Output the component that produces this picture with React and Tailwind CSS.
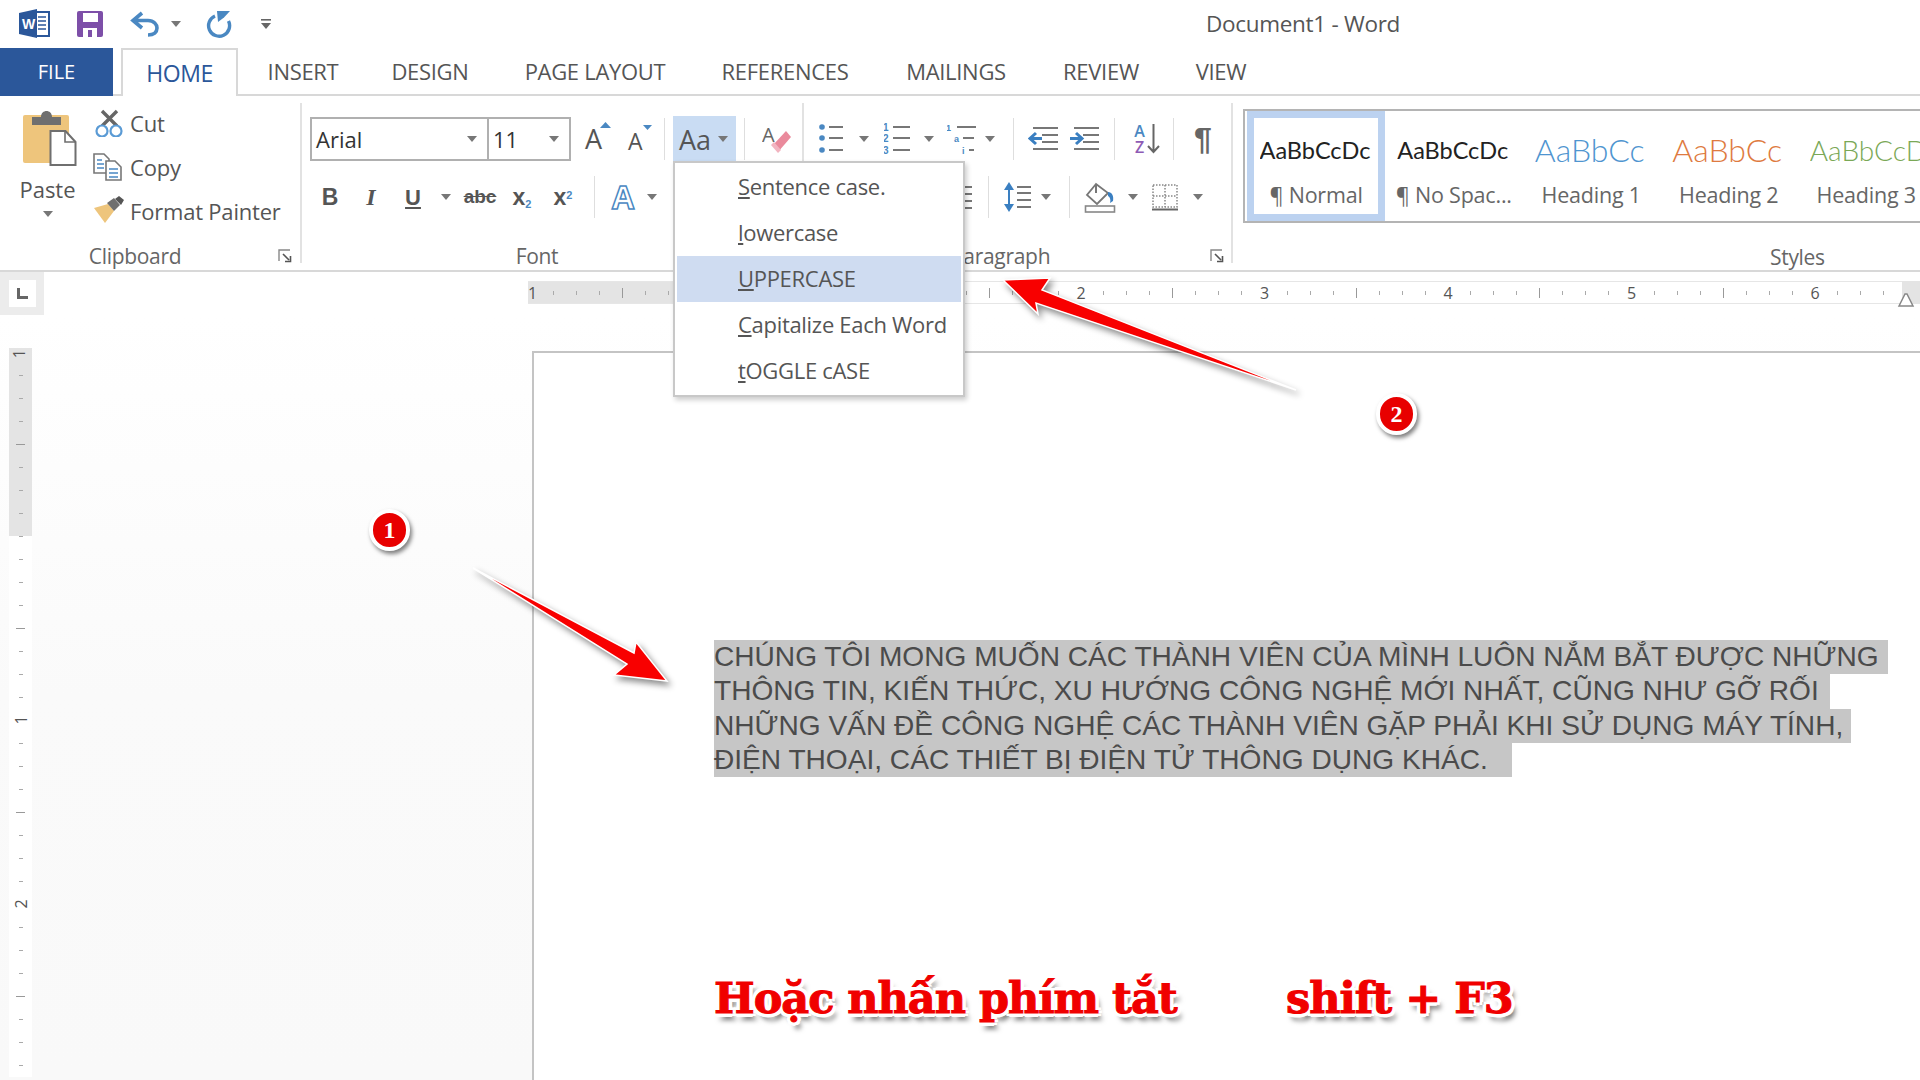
import React from 'react';

const tabs = [
  ['INSERT', 'w-[130px]'],
  ['DESIGN', 'w-[124px]'],
  ['PAGE LAYOUT', 'w-[206px]'],
  ['REFERENCES', 'w-[174px]'],
  ['MAILINGS', 'w-[168px]'],
  ['REVIEW', 'w-[122px]'],
  ['VIEW', 'w-[118px]'],
];

const caseItems = [
  ['S', 'entence case.'],
  ['l', 'owercase'],
  ['U', 'PPERCASE'],
  ['C', 'apitalize Each Word'],
  ['t', 'OGGLE cASE'],
];

const styleItems = [
  { name: '¶ Normal', sample: 'AaBbCcDc', cls: 'text-[23.5px] text-[#222]', selected: true },
  { name: '¶ No Spac...', sample: 'AaBbCcDc', cls: 'text-[23.5px] text-[#222]' },
  { name: 'Heading 1', sample: 'AaBbCc', cls: 'text-[32px] font-light text-[#4f95d0]' },
  { name: 'Heading 2', sample: 'AaBbCc', cls: 'text-[32px] font-light text-[#de7a40]' },
  { name: 'Heading 3', sample: 'AaBbCcD', cls: 'text-[28px] font-light text-[#7aa856]' },
];

const textLines = [
  ['CHÚNG TÔI MONG MUỐN CÁC THÀNH VIÊN CỦA MÌNH LUÔN NẮM BẮT ĐƯỢC NHỮNG', 'w-[1174px]'],
  ['THÔNG TIN, KIẾN THỨC, XU HƯỚNG CÔNG NGHỆ MỚI NHẤT, CŨNG NHƯ GỠ RỐI', 'w-[1116px]'],
  ['NHỮNG VẤN ĐỀ CÔNG NGHỆ CÁC THÀNH VIÊN GẶP PHẢI KHI SỬ DỤNG MÁY TÍNH,', 'w-[1137px]'],
  ['ĐIỆN THOẠI, CÁC THIẾT BỊ ĐIỆN TỬ THÔNG DỤNG KHÁC.', 'w-[798px]'],
];

function Caret({ className = '' }) {
  return (
    <svg width="10" height="6" viewBox="0 0 10 6" className={`shrink-0 ${className}`}>
      <path d="M0 0h10L5 6z" fill="#777" />
    </svg>
  );
}

function Sep({ className = '' }) {
  return <div className={`w-px h-[42px] bg-[#dedede] shrink-0 ${className}`} />;
}

function Launcher() {
  return (
    <svg width="14" height="14" viewBox="0 0 14 14">
      <path d="M1 12V1h11" fill="none" stroke="#888" strokeWidth="1.4" />
      <path d="M5 5l6 6M12.5 7v5.5H7" fill="none" stroke="#555" strokeWidth="1.6" />
    </svg>
  );
}

function WordIcon() {
  return (
    <svg width="32" height="30" viewBox="19 6 32 30" className="shrink-0">
      <rect x="33" y="9" width="16" height="24" fill="#fff" stroke="#2b579a" strokeWidth="2" />
      <path d="M38 14h8M38 18h8M38 22h8M38 26h8" stroke="#2b579a" strokeWidth="1.6" />
      <path d="M19 10L37 6v29l-18-4z" fill="#2b579a" />
      <text x="22" y="26" fontSize="14" fontWeight="700" fill="#fff" fontFamily="Liberation Sans, sans-serif">W</text>
    </svg>
  );
}

function SaveIcon() {
  return (
    <svg width="28" height="28" viewBox="76 7 28 28" className="shrink-0">
      <rect x="77" y="8" width="26" height="26" rx="2" fill="#7d4fa8" />
      <rect x="83" y="10" width="15" height="9" fill="#fff" />
      <rect x="83" y="25" width="14" height="9" fill="#fff" />
      <rect x="88" y="27" width="4" height="7" fill="#7d4fa8" />
    </svg>
  );
}

function UndoIcon() {
  return (
    <svg width="30" height="28" viewBox="130 6 30 28" className="shrink-0">
      <path d="M142 9l-9 7.500 9 7.500M134 16.500h14c6 0 9 4 9 7.500 0 4-3 7-9 7" fill="none" stroke="#4a88c2" strokeWidth="3.600" />
    </svg>
  );
}

function RepeatIcon() {
  return (
    <svg width="28" height="28" viewBox="207 6 28 28" className="shrink-0">
      <path d="M217 12a10.500 10.500 0 1 0 13.500 5" fill="none" stroke="#4a88c2" strokeWidth="3.400" />
      <path d="M219 7l1 11 6-4.500 6-6.500z" fill="#4a88c2" />
    </svg>
  );
}

function CustomizeIcon() {
  return (
    <svg width="12" height="12" viewBox="0 0 12 12" className="shrink-0">
      <path d="M1 1h10v1.600H1z" fill="#666" />
      <path d="M1 5h10L6 11z" fill="#666" />
    </svg>
  );
}

function PasteIcon() {
  return (
    <svg width="56" height="60" viewBox="24 110 56 60" className="shrink-0">
      <rect x="25" y="116" width="46" height="48" rx="2" fill="#eec57c" />
      <path d="M34 126v-8h9c0-8 11-8 11 0h9v8z" fill="#6f6f6f" />
      <path d="M52.500 132h15l10 11v23h-25z" fill="#fff" stroke="#6f6f6f" strokeWidth="2" />
      <path d="M67 132v11h10" fill="none" stroke="#6f6f6f" strokeWidth="1.600" />
    </svg>
  );
}

function CutIcon() {
  return (
    <svg width="28" height="28" viewBox="95 107 28 28" className="shrink-0">
      <path d="M102 109l15 15M117 109l-15 15" stroke="#666" strokeWidth="3.400" />
      <circle cx="102" cy="129" r="5.500" fill="#fff" stroke="#5b9bd5" strokeWidth="2.200" />
      <circle cx="116" cy="129" r="5.500" fill="#fff" stroke="#5b9bd5" strokeWidth="2.200" />
    </svg>
  );
}

function CopyIcon() {
  return (
    <svg width="30" height="30" viewBox="93 152 30 30" className="shrink-0">
      <path d="M94 154h10l5 5v14H94z" fill="#fff" stroke="#777" strokeWidth="1.600" />
      <path d="M97 160h5M97 164h7M97 168h7" stroke="#4a88c2" strokeWidth="1.500" />
      <path d="M106 161h9l6 6v13h-15z" fill="#fff" stroke="#777" strokeWidth="1.600" />
      <path d="M109 169h9M109 173h9M109 177h9" stroke="#4a88c2" strokeWidth="1.500" />
    </svg>
  );
}

function PainterIcon() {
  return (
    <svg width="32" height="30" viewBox="93 196 32 30" className="shrink-0">
      <path d="M94 208l11 15 9-12-6-7z" fill="#eec57c" />
      <path d="M107 203l7 8 6-6-6-7z" fill="#6f6f6f" />
      <path d="M115 199l4-3 5 4-3 5z" fill="#555" />
    </svg>
  );
}

function GrowIcon() {
  return (
    <div className="relative w-[26px] h-[24px] text-[27px] leading-[24px] text-[#555]">
      A
      <svg width="11" height="6" viewBox="0 0 11 6" className="absolute right-0 -top-[5px]">
        <path d="M0 6h11L5.500 0z" fill="#4a88c2" />
      </svg>
    </div>
  );
}

function ShrinkIcon() {
  return (
    <div className="relative w-[24px] h-[20px] text-[23px] leading-[20px] text-[#555]">
      A
      <svg width="9" height="5" viewBox="0 0 9 5" className="absolute right-0 -top-[6px]">
        <path d="M0 0h9L4.500 5z" fill="#4a88c2" />
      </svg>
    </div>
  );
}

function EraserIcon() {
  return (
    <svg width="30" height="30" viewBox="761 122 30 30" className="shrink-0">
      <text x="761" y="140" fontSize="20" fill="#666" fontFamily="Open Sans, sans-serif">A</text>
      <path d="M773 142l12-13 5 6-13 15z" fill="#ea8a9c" />
      <path d="M770 143l7 8 3-3-7-8z" fill="#f2b4c0" />
    </svg>
  );
}

function BulletIcon() {
  return (
    <svg width="26" height="32" viewBox="820 121 26 32" className="shrink-0">
      <g fill="#4a88c2">
        <circle cx="823" cy="125" r="2.800" />
        <circle cx="823" cy="136" r="2.800" />
        <circle cx="823" cy="148" r="2.800" />
      </g>
      <path d="M830 125h14M830 136h14M830 148h14" stroke="#777" strokeWidth="2" />
    </svg>
  );
}

function NumberIcon() {
  return (
    <svg width="28" height="32" viewBox="885 121 28 32" className="shrink-0">
      <g fill="#4a88c2" fontSize="10" fontWeight="700" fontFamily="Liberation Sans, sans-serif">
        <text x="884" y="129">1</text>
        <text x="884" y="140">2</text>
        <text x="884" y="152">3</text>
      </g>
      <path d="M894 125h17M894 136h17M894 148h17" stroke="#777" strokeWidth="2" />
    </svg>
  );
}

function MultiIcon() {
  return (
    <svg width="30" height="34" viewBox="948 120 30 34" className="shrink-0">
      <g fill="#4a88c2" fontSize="9" fontWeight="700" fontFamily="Liberation Sans, sans-serif">
        <text x="947" y="129">1</text>
        <text x="955" y="140">a</text>
        <text x="963" y="152">i</text>
      </g>
      <path d="M958 125h19M964 136h11M970 148h5" stroke="#777" strokeWidth="2" />
    </svg>
  );
}

function IndentIcon({ flip }) {
  return (
    <svg width="32" height="26" viewBox="0 0 32 26" className="shrink-0">
      <path d="M5 2h25M14 9h16M14 16h16M5 23h25" stroke="#777" strokeWidth="2" />
      {flip ? (
        <path d="M1 12.500h11M7 7l6 5.500-6 5.500" fill="none" stroke="#3a7fc1" strokeWidth="3" />
      ) : (
        <path d="M14 12.500H3M8 7l-6 5.500L8 18" fill="none" stroke="#3a7fc1" strokeWidth="3" />
      )}
    </svg>
  );
}

function SortIcon() {
  return (
    <div className="flex w-[28px] h-[32px] shrink-0 items-center">
      <div className="flex flex-col w-[15px] text-[16px] leading-[16px] font-semibold text-center">
        <span className="text-[#4a88c2]">A</span>
        <span className="text-[#8e5bb5]">Z</span>
      </div>
      <svg width="13" height="30" viewBox="0 0 13 30">
        <path d="M6.500 0v28M1 22l5.500 6 5.500-6" fill="none" stroke="#666" strokeWidth="2" />
      </svg>
    </div>
  );
}

function LineSpacingIcon() {
  return (
    <svg width="28" height="32" viewBox="0 0 28 32" className="shrink-0">
      <path d="M5 6v20" stroke="#3a7fc1" strokeWidth="2" />
      <path d="M0 9l5-8 5 8zM0 23l5 8 5-8z" fill="#3a7fc1" />
      <path d="M13 6h14M13 12h14M13 19h14M13 26h14" stroke="#777" strokeWidth="2" />
    </svg>
  );
}

function ShadingIcon() {
  return (
    <svg width="32" height="32" viewBox="0 0 32 32" className="shrink-0">
      <path d="M12 3l-9 11 10 9 11-11z" fill="#fff" stroke="#777" strokeWidth="1.800" />
      <path d="M12 3v9" stroke="#777" strokeWidth="2" />
      <path d="M24 11c4 0 6 4 5 9l-3 2c1-3 0-6-2-7z" fill="#3a7fc1" />
      <rect x="1.500" y="25" width="29" height="6" fill="#fff" stroke="#888" strokeWidth="1.600" />
    </svg>
  );
}

function BordersIcon() {
  return (
    <svg width="26" height="27" viewBox="0 0 26 27" className="shrink-0">
      <path d="M1 1h24v22H1zM13 1v22M1 12h24" fill="none" stroke="#888" strokeWidth="1.500" strokeDasharray="1.500 1.500" />
      <path d="M0 25.500h26" stroke="#666" strokeWidth="2" />
    </svg>
  );
}

function HorizontalRuler() {
  const cells = Array.from({ length: 60 }, (_, i) => i);
  const labels = { 24: '2', 32: '3', 40: '4', 48: '5', 56: '6' };
  return (
    <div className="flex items-start h-[43px] pt-[9px] bg-white">
      <div className="w-[44px] h-[43px] -mt-[9px] bg-[#ececec] flex items-center justify-center shrink-0">
        <div className="w-[27px] h-[27px] bg-white flex items-center justify-center">
          <div className="w-[11px] h-[11px] border-l-[3px] border-b-[3px] border-[#666]" />
        </div>
      </div>
      <div className="w-[484px] shrink-0" />
      <div className="flex h-[23px] flex-1 border-y border-[#e6e6e6] overflow-hidden">
        <div className="w-[13.950px] shrink-0 flex items-center bg-[#e4e4e4]">
          <span className="text-[16px] leading-none text-[#555]">1</span>
        </div>
        {cells.slice(1).map((i) => (
          <div
            key={i}
            className={
              i < 8
                ? 'w-[22.95px] shrink-0 flex items-center justify-center bg-[#e4e4e4]'
                : 'w-[22.95px] shrink-0 flex items-center justify-center'
            }
          >
            {labels[i] ? (
              <span className="text-[16px] leading-none text-[#555]">{labels[i]}</span>
            ) : i % 8 === 4 ? (
              <span className="w-px h-[10px] bg-[#999]" />
            ) : (
              <span className="w-px h-[4px] bg-[#aaa]" />
            )}
          </div>
        ))}
      </div>
    </div>
  );
}

function VerticalRuler() {
  const cells = Array.from({ length: 32 }, (_, i) => i);
  const labels = { 16: '1', 24: '2' };
  const rowClass = (i) => {
    if (i < 8) return 'h-[23px] shrink-0 flex items-center justify-center bg-[#e4e4e4]';
    if (i === 8) return 'h-[23px] shrink-0 flex items-center justify-center bg-[linear-gradient(#e4e4e4_50%,#fff_50%)]';
    return 'h-[23px] shrink-0 flex items-center justify-center bg-white';
  };
  return (
    <div className="flex flex-col w-[23px] ml-[9px] mt-[33px]">
      <div className="h-[15.500px] shrink-0 flex justify-center bg-[#e4e4e4]">
        <span className="text-[16px] leading-none text-[#555] -rotate-90 -mt-[4px]">1</span>
      </div>
      {cells.slice(1).map((i) => (
        <div key={i} className={rowClass(i)}>
          {labels[i] ? (
            <span className="text-[16px] leading-none text-[#555] -rotate-90">{labels[i]}</span>
          ) : i % 8 === 4 ? (
            <span className="h-px w-[9px] bg-[#999]" />
          ) : (
            <span className="h-px w-[4px] bg-[#aaa]" />
          )}
        </div>
      ))}
    </div>
  );
}

export default function App() {
  return (
    <div className="relative w-[1920px] h-[1080px] overflow-hidden bg-white text-[#555] font-['Open_Sans',sans-serif]">
      {/* title bar */}
      <div className="flex items-center h-[48px] pl-[19px]">
        <WordIcon />
        <div className="ml-[25px]"><SaveIcon /></div>
        <div className="ml-[26px]"><UndoIcon /></div>
        <Caret className="ml-[11px]" />
        <div className="ml-[24px]"><RepeatIcon /></div>
        <div className="ml-[27px]"><CustomizeIcon /></div>
        <div className="ml-[931px] w-[200px] text-center text-[22.500px] tracking-[-0.3px] text-[#555] whitespace-nowrap">Document1 - Word</div>
      </div>

      {/* tabs */}
      <div className="flex items-stretch h-[48px] border-b-2 border-[#d8d8d8]">
        <div className="w-[113px] h-[48px] bg-[#2b579a] text-white flex items-center justify-center text-[20px]">FILE</div>
        <div className="ml-[8px] w-[117px] h-[48px] bg-white border-x-2 border-t-2 border-[#d8d8d8] flex items-center justify-center text-[23px] tracking-[-0.4px] text-[#2b579a] z-10">
          HOME
        </div>
        {tabs.map(([label, cls]) => (
          <div key={label} className={`${cls} text-[22px] tracking-[-0.3px] text-center leading-[46px] whitespace-nowrap`}>{label}</div>
        ))}
      </div>

      {/* ribbon */}
      <div className="flex h-[176px] pt-[7px] border-b-2 border-[#d8d8d8]">
        {/* clipboard */}
        <div className="w-[302px] h-[160px] border-r-2 border-[#e2e2e2] flex flex-col shrink-0">
          <div className="flex h-[124px] pt-[6px] shrink-0">
            <div className="w-[95px] shrink-0 flex flex-col items-center">
              <div className="pl-[4px]"><PasteIcon /></div>
              <span className="text-[22px] leading-[28px] mt-[6px]">Paste</span>
              <Caret className="mt-[8px]" />
            </div>
            <div className="flex flex-col -mt-[1px]">
              <div className="flex items-center h-[30px]"><CutIcon /><span className="ml-[7px] text-[22px] tracking-[-0.2px]">Cut</span></div>
              <div className="flex items-center h-[30px] mt-[14px] -ml-[2px]"><CopyIcon /><span className="ml-[7px] text-[22px] tracking-[-0.2px]">Copy</span></div>
              <div className="flex items-center h-[30px] mt-[14px] -ml-[2px]"><PainterIcon /><span className="ml-[5px] text-[22px] tracking-[-0.2px] whitespace-nowrap">Format Painter</span></div>
            </div>
          </div>
          <div className="flex items-center mt-[16px] shrink-0">
            <span className="w-[270px] text-center text-[21px] tracking-[-0.3px] leading-[26px] text-[#666]">Clipboard</span>
            <div className="ml-[8px]"><Launcher /></div>
          </div>
        </div>

        {/* font */}
        <div className="w-[502px] h-[160px] border-r-2 border-[#e2e2e2] flex flex-col shrink-0 pl-[8px] pt-[13px]">
          <div className="flex items-center h-[46px] shrink-0">
            <div className="flex items-center justify-between w-[179px] h-[44px] border-2 border-[#b0b0b0] pl-[4px] pr-[10px] text-[22px] leading-[36px] text-[#333] shrink-0">
              Arial<Caret />
            </div>
            <div className="flex items-center justify-between w-[84px] h-[44px] -ml-[2px] border-2 border-[#b0b0b0] pl-[4px] pr-[10px] text-[22px] leading-[36px] text-[#333] shrink-0">
              11<Caret />
            </div>
            <div className="ml-[14px]"><GrowIcon /></div>
            <div className="ml-[17px] mt-[4px]"><ShrinkIcon /></div>
            <Sep className="ml-[12px]" />
            <div className="ml-[8px] flex items-center w-[63px] h-[46px] bg-[#c9dcf3] pl-[6px] shrink-0">
              <span className="text-[27px] leading-none text-[#555]">Aa</span>
              <Caret className="ml-[7px]" />
            </div>
            <Sep className="ml-[8px]" />
            <div className="ml-[17px]"><EraserIcon /></div>
          </div>
          <div className="flex items-center h-[46px] mt-[12px] shrink-0">
            <span className="w-[40px] text-center font-['Liberation_Sans',sans-serif] font-bold text-[23px]">B</span>
            <span className="w-[42px] text-center font-['Liberation_Serif',serif] italic font-bold text-[24px]">I</span>
            <span className="w-[42px] text-center font-['Liberation_Sans',sans-serif] font-bold text-[22px] underline">U</span>
            <div className="w-[24px] flex justify-center"><Caret /></div>
            <span className="w-[44px] text-center font-['Liberation_Sans',sans-serif] font-bold text-[19px] line-through">abc</span>
            <span className="w-[40px] text-center font-['Liberation_Sans',sans-serif] font-bold text-[23px]">x<sub className="text-[11px] text-[#4a88c2]">2</sub></span>
            <span className="w-[42px] text-center font-['Liberation_Sans',sans-serif] font-bold text-[23px]">x<sup className="text-[11px] text-[#4a88c2]">2</sup></span>
            <Sep className="ml-[10px]" />
            <span className="ml-[17px] w-[26px] text-[32px] leading-none font-bold text-white [-webkit-text-stroke:1.500px_#4a88c2]">A</span>
            <Caret className="ml-[9px]" />
          </div>
          <div className="mt-[23px] -ml-[8px] text-center text-[21px] tracking-[-0.3px] leading-[26px] text-[#666] pr-[30px] shrink-0">Font</div>
        </div>

        {/* paragraph */}
        <div className="w-[429px] h-[160px] border-r-2 border-[#e2e2e2] flex flex-col shrink-0 pt-[13px]">
          <div className="flex items-center h-[46px] pl-[15px] shrink-0">
            <BulletIcon />
            <Caret className="ml-[14px]" />
            <div className="ml-[15px]"><NumberIcon /></div>
            <Caret className="ml-[12px]" />
            <div className="ml-[13px]"><MultiIcon /></div>
            <Caret className="ml-[8px]" />
            <Sep className="ml-[18px]" />
            <div className="ml-[14px]"><IndentIcon /></div>
            <div className="ml-[9px]"><IndentIcon flip /></div>
            <Sep className="ml-[13px]" />
            <div className="ml-[17px]"><SortIcon /></div>
            <Sep className="ml-[13px]" />
            <span className="ml-[20px] w-[22px] text-[32px] leading-none font-bold text-[#666] font-['Liberation_Sans',sans-serif]">¶</span>
          </div>
          <div className="flex items-center h-[46px] mt-[12px] shrink-0">
            <div className="ml-[150px] w-[18px] flex flex-col gap-[5px] shrink-0">
              <span className="h-[2px] bg-[#777]" />
              <span className="h-[2px] bg-[#777]" />
              <span className="h-[2px] bg-[#777]" />
              <span className="h-[2px] bg-[#777]" />
            </div>
            <Sep className="ml-[16px]" />
            <div className="ml-[15px]"><LineSpacingIcon /></div>
            <Caret className="ml-[9px]" />
            <Sep className="ml-[18px]" />
            <div className="ml-[14px]"><ShadingIcon /></div>
            <Caret className="ml-[12px]" />
            <div className="ml-[14px]"><BordersIcon /></div>
            <Caret className="ml-[15px]" />
          </div>
          <div className="flex items-center mt-[23px] shrink-0">
            <span className="ml-[147px] text-[21px] tracking-[-0.3px] leading-[26px] text-[#666]">Paragraph</span>
            <div className="ml-auto mr-[7px]"><Launcher /></div>
          </div>
        </div>

        {/* styles */}
        <div className="flex-1 min-w-0 flex flex-col h-[160px] pl-[10px] pt-[6px]">
          <div className="flex h-[114px] shrink-0 border-2 border-r-0 border-[#b4b4b4] pl-[2px] overflow-hidden">
            {styleItems.map((item) => (
              <div
                key={item.name}
                className={
                  item.selected
                    ? 'w-[138px] shrink-0 flex flex-col items-center border-[7px] border-[#bcd2f0] overflow-hidden'
                    : 'w-[137.500px] shrink-0 flex flex-col items-center border-[7px] border-transparent overflow-hidden'
                }
              >
                <div className={`w-[113px] h-[56px] shrink-0 mt-[7px] overflow-hidden whitespace-nowrap leading-[50px] font-['Lato',sans-serif] ${item.cls}`}>
                  {item.sample}
                </div>
                <span className="text-[21.500px] leading-[28px] tracking-[-0.2px] whitespace-nowrap text-[#666]">{item.name}</span>
              </div>
            ))}
          </div>
          <div className="mt-[21px] pl-[527px] text-[21px] tracking-[-0.3px] leading-[26px] text-[#666] shrink-0">Styles</div>
        </div>
      </div>

      <HorizontalRuler />

      {/* workspace */}
      <div className="flex h-[765px] bg-gradient-to-b from-[#ffffff] via-[#fafafa] to-[#f9f9f9]">
        <div className="w-[532px] shrink-0 overflow-hidden">
          <VerticalRuler />
        </div>
        <div className="flex-1 mt-[36px] bg-white border-l-2 border-t-2 border-[#c4c4c4] pl-[180px] pt-[287px]">
          <div className="font-['Liberation_Sans',sans-serif] text-[28.100px] text-[#4b4b4b]">
            {textLines.map(([line, cls]) => (
              <div key={line} className={`${cls} h-[34.250px] leading-[34px] bg-[#c6c6c6] whitespace-nowrap`}>{line}</div>
            ))}
          </div>
          <div className="flex items-center mt-[193px] font-['DejaVu_Serif',serif] font-bold text-[43px] leading-[56px] tracking-[-1px] text-[#f00000] [-webkit-text-stroke:1px_#f00000] [text-shadow:-3px_-3px_0_#fff,3px_-3px_0_#fff,-3px_3px_0_#fff,3px_3px_0_#fff,0_4px_0_#fff,4px_0_0_#fff,-4px_0_0_#fff,0_-4px_0_#fff,4px_7px_5px_rgba(0,0,0,0.55)]">
            <span className="w-[572px] whitespace-nowrap">Hoặc nhấn phím tắt</span>
            <span className="whitespace-nowrap">shift + F3</span>
          </div>
        </div>
      </div>

      {/* change case menu */}
      <div className="absolute left-[673px] top-[161px] w-[292px] h-[236px] bg-white border-2 border-[#c8c8c8] shadow-[2px_3px_5px_rgba(0,0,0,0.2)] pt-[1px] px-[2px] z-20">
        {caseItems.map(([first, rest]) => (
          <div
            key={rest}
            className={
              rest === 'PPERCASE'
                ? 'h-[46px] flex items-center pl-[61px] pb-[2px] text-[22px] tracking-[-0.3px] text-[#555] bg-[#cfdcf1]'
                : 'h-[46px] flex items-center pl-[61px] pb-[2px] text-[22px] tracking-[-0.3px] text-[#555]'
            }
          >
            <span><u>{first}</u>{rest}</span>
          </div>
        ))}
      </div>

      {/* annotations */}
      <svg viewBox="0 0 1920 1080" className="absolute inset-0 w-[1920px] h-[1080px] z-30 pointer-events-none">
        <rect x="1902" y="281" width="18" height="23" fill="#e4e4e4" />
        <path d="M1899 306l6-12h2l6 12z" fill="#fff" stroke="#888" strokeWidth="1.500" />
        <g className="drop-shadow-[3px_4px_3px_rgba(0,0,0,0.45)]">
          <path d="M473 568L634 653 636 642 667 681 614 675 627 664z" fill="#f80000" stroke="#fff" strokeWidth="1.500" />
          <path d="M1003 280L1050 278 1042 290 1296 390 1036 303 1038 314z" fill="#f80000" stroke="#fff" strokeWidth="1.500" />
        </g>
      </svg>

      <div className="absolute left-[369px] top-[509px] w-[41px] h-[42px] rounded-full bg-[#e80000] border-[4px] border-white shadow-[2px_3px_4px_rgba(0,0,0,0.5)] flex items-center justify-center text-white font-bold text-[24px] font-['Liberation_Serif',serif] z-30">1</div>
      <div className="absolute left-[1376px] top-[393px] w-[41px] h-[42px] rounded-full bg-[#e80000] border-[4px] border-white shadow-[2px_3px_4px_rgba(0,0,0,0.5)] flex items-center justify-center text-white font-bold text-[24px] font-['Liberation_Serif',serif] z-30">2</div>
    </div>
  );
}
